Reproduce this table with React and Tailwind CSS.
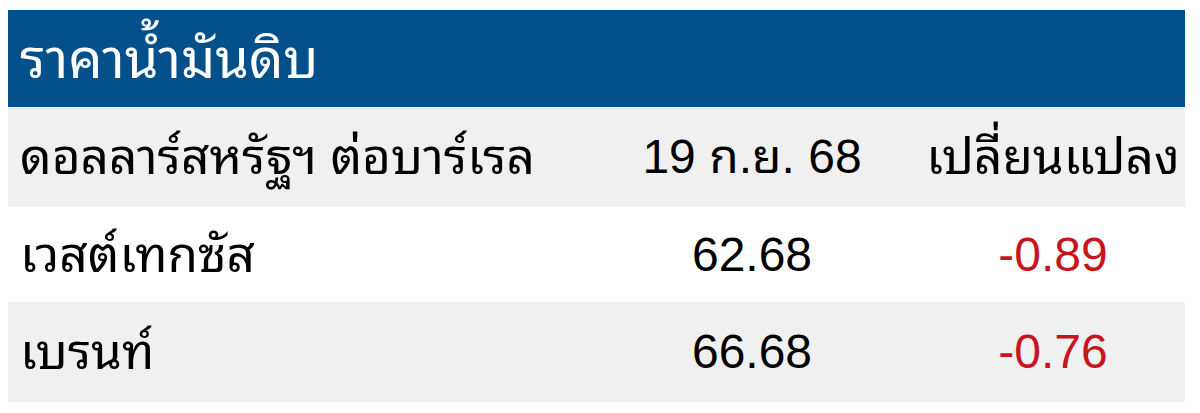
export default function App() {
  const font = { fontFamily: '"Liberation Sans", "Noto Sans Thai Looped", "Noto Sans Thai", "Noto Sans", Tahoma, sans-serif' };
  return (
    <div className="w-[1200px] h-[413px] bg-white pt-[10px] pl-[8px]" style={font}>
      <div className="w-[1177px]">
        <div className="h-[97px] bg-[#03508a] flex items-center pl-[12px]">
          <span className="text-white text-[54px] leading-none">ราคาน้ำมันดิบ</span>
        </div>
        <div className="grid grid-cols-[575px_338px_264px] h-[100px] bg-[#f0f0f0] items-center text-black text-[48px] leading-none">
          <div className="pl-[12px] whitespace-nowrap text-[49.5px]">ดอลลาร์สหรัฐฯ ต่อบาร์เรล</div>
          <div className="text-center whitespace-nowrap">19 ก.ย. 68</div>
          <div className="text-center whitespace-nowrap text-[49.5px]">เปลี่ยนแปลง</div>
        </div>
        <div className="grid grid-cols-[575px_338px_264px] h-[95px] bg-white items-center text-black text-[48px] leading-none">
          <div className="pl-[12px] text-[49.5px]">เวสต์เทกซัส</div>
          <div className="text-center">62.68</div>
          <div className="text-center text-[#c8141c]">-0.89</div>
        </div>
        <div className="grid grid-cols-[575px_338px_264px] h-[100px] bg-[#f0f0f0] items-center text-black text-[48px] leading-none">
          <div className="pl-[12px] text-[49.5px]">เบรนท์</div>
          <div className="text-center">66.68</div>
          <div className="text-center text-[#c8141c]">-0.76</div>
        </div>
      </div>
    </div>
  );
}
